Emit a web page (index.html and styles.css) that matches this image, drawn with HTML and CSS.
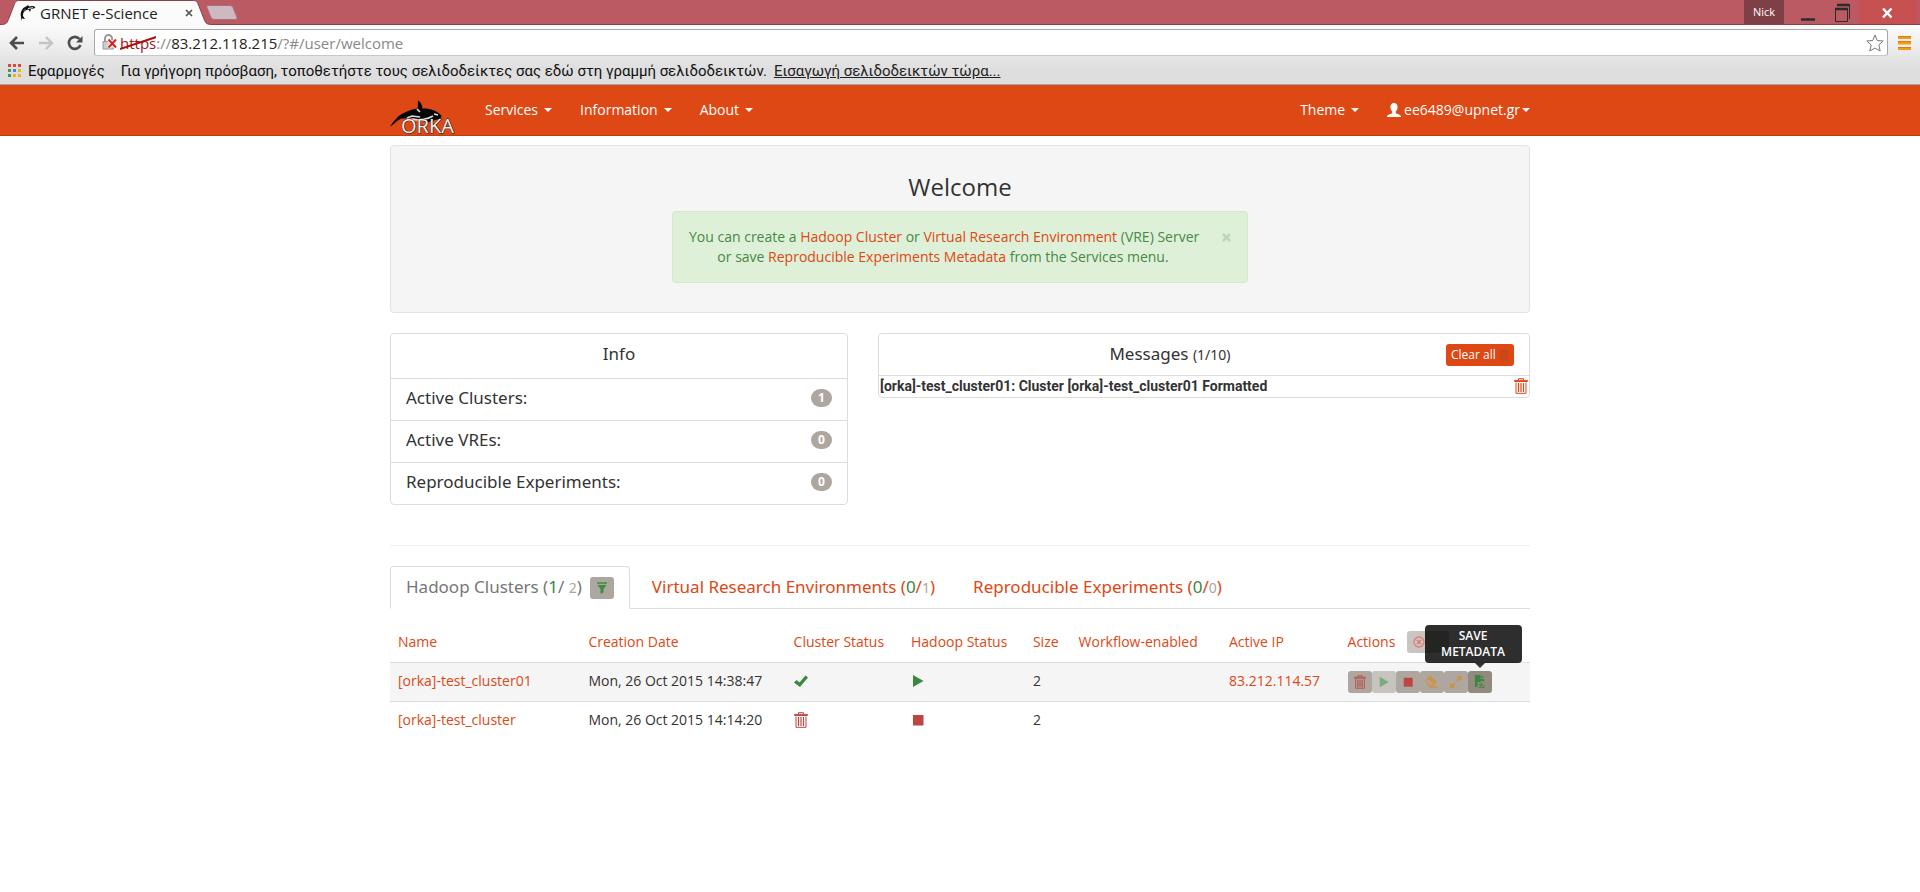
FILE: index.html
```html
<!DOCTYPE html>
<html lang="en">
<head>
<meta charset="utf-8">
<title>GRNET e-Science</title>
<link rel="stylesheet" href="styles.css">
</head>
<body>
<svg class="defs" aria-hidden="true">
  <symbol id="trash" viewBox="0 0 14 16"><path d="M4.500 2V.700h5V2M.500 3.500V2.400h13v1.100zM2 4.500v10.800h10V4.500" fill="none" stroke="currentColor"/><path d="M4.500 5v9M7 5v9M9.500 5v9" stroke="currentColor" stroke-width="1.200"/></symbol>
  <symbol id="play" viewBox="0 0 14 14"><path d="M2 1l10.500 6L2 13z" fill="currentColor"/></symbol>
  <symbol id="stop" viewBox="0 0 14 14"><path d="M2 2h10.500v10.500H2z" fill="currentColor"/></symbol>
</svg>
<header class="browser">
  <div class="tabstrip">
    <div class="tab-shape">
      <svg class="tab-bg" viewBox="0 0 213 25" preserveAspectRatio="none" aria-hidden="true"><path d="M0 24.500C7 24.500 7 23 9 18L14 5C15.500 1.500 16 .500 20 .500H192C196 .500 197 1 198.500 5L204 19C206 24 207 24.500 213 24.500V25H0z" fill="#fbfbfb"/><path d="M0 24.500C7 24.500 7 23 9 18L14 5C15.500 1.500 16 .500 20 .500H192C196 .500 197 1 198.500 5L204 19C206 24 207 24.500 213 24.500" fill="none" stroke="#8b3f47"/></svg>
      <svg class="favicon" viewBox="0 0 16 16" aria-hidden="true"><path d="M1 12C0 7 2 3 6 1.500L8 0l1 1.500C12 .500 14 1 15.500 2L14 3.500 11 4l-1 3-1.500-2.500C5 5 3 7 3 11l2 3-3-.500L1.500 16z" fill="#111"/><path d="M8 3.500l5-.800M4 5.500l1-1" stroke="#eee"/></svg>
      <span class="tab-title">GRNET e-Science</span>
      <button class="tab-close" aria-label="Close tab"><svg width="8" height="8" viewBox="0 0 8 8"><path d="M1 1l6 6M7 1L1 7" stroke="#555" stroke-width="1.700"/></svg></button>
    </div>
    <button class="new-tab" aria-label="New tab"><svg width="32" height="15" viewBox="0 0 32 15"><path d="M2 .500h22q2 0 3 2l4 10q.500 2-2 2H9q-3 0-4-2L1 2.500Q0 .500 2 .500z" fill="#ccb9c1" stroke="#a9707b"/></svg></button>
    <div class="window-controls">
      <button class="profile">Nick</button>
      <button class="win" aria-label="Minimize"><svg width="48" height="24"><path d="M17 20.500h14" stroke="#2b2b2b" stroke-width="2.500"/></svg></button>
      <button class="win" aria-label="Restore"><svg width="27" height="24"><path d="M3.500 10.500h12v12h-12z" fill="none" stroke="#2b2b2b"/><path d="M3 10h13M5 6h12" stroke="#2b2b2b" stroke-width="2.500"/><path d="M17.500 5v15" stroke="#2b2b2b"/></svg></button>
      <button class="win close" aria-label="Close"><svg width="58" height="24"><path d="M24 9.500l8.500 9M32.500 9.500l-8.500 9" stroke="#fff" stroke-width="2.500"/></svg></button>
    </div>
  </div>
  <div class="toolbar">
    <button class="tool" aria-label="Back"><svg width="16" height="14" viewBox="0 0 16 14"><path d="M15 7H2M8 1L2 7l6 6" fill="none" stroke="#4d4d4d" stroke-width="2.600"/></svg></button>
    <button class="tool" aria-label="Forward"><svg width="16" height="14" viewBox="0 0 16 14"><path d="M1 7h13M8 1l6 6-6 6" fill="none" stroke="#c4c4c4" stroke-width="2.400"/></svg></button>
    <button class="tool" aria-label="Reload"><svg width="16" height="16" viewBox="0 0 16 16"><path d="M12.500 4A6 6 0 1 0 13.500 10" fill="none" stroke="#4d4d4d" stroke-width="2.600"/><path d="M15.500 1v6.500H9z" fill="#4d4d4d"/></svg></button>
    <div class="address">
      <svg width="16" height="17" viewBox="0 0 16 17" aria-hidden="true"><path d="M3 8V4.500a3.500 3.500 0 0 1 7 0V8" fill="none" stroke="#999" stroke-width="2"/><path d="M1 7.500h10.500v7.500H1z" fill="#ccc" stroke="#999"/><path d="M6.500 5.500l7.500 8M14 5.500L6.500 13.500" stroke="#fff" stroke-width="4"/><path d="M6.500 5.500l7.500 8M14 5.500L6.500 13.500" stroke="#dc1c1c" stroke-width="2"/></svg>
      <div class="url" role="textbox" aria-label="Address"><span class="scheme">https<svg viewBox="0 0 36 14" preserveAspectRatio="none" aria-hidden="true"><path d="M0 13L36 1" stroke="#a31515" stroke-width="2"/></svg></span><span class="dim">://</span>83.212.118.215<span class="dim">/?#/user/welcome</span></div>
      <button class="star" aria-label="Bookmark"><svg width="18" height="18" viewBox="0 0 18 18"><path d="M9 1l2.200 5.500 6 .500-4.400 4 1.400 6L9 14l-5.200 3 1.400-6L.800 7l6-.500z" fill="#fff" stroke="#777" stroke-linejoin="round"/></svg></button>
    </div>
    <button class="menu" aria-label="Menu"><svg width="13" height="14" viewBox="0 0 13 14"><path d="M0 1.500h13M0 7h13M0 12.500h13" stroke="#f39c12" stroke-width="3"/><path d="M0 .500h13M0 5.500h13M0 11.500h13" stroke="#dd7a10"/></svg></button>
  </div>
  <div class="bookmarks">
    <svg width="14" height="14" viewBox="0 0 14 14" aria-hidden="true"><path d="M0 0h3v3H0zM5 0h3v3H5zM10 0h3v3h-3z" fill="#ea4335"/><path d="M0 5h3v3H0z" fill="#34a050"/><path d="M5 5h3v3H5z" fill="#3b83f0"/><path d="M10 5h3v3h-3zM5 10h3v3H5zM10 10h3v3h-3z" fill="#f6b010"/><path d="M0 10h3v3H0z" fill="#34a050"/></svg>
    <span class="apps">Εφαρμογές</span>
    <span class="hint">Για γρήγορη πρόσβαση, τοποθετήστε τους σελιδοδείκτες σας εδώ στη γραμμή σελιδοδεικτών.</span>
    <a href="#import">Εισαγωγή σελιδοδεικτών τώρα...</a>
  </div>
</header>

<nav class="navbar">
  <div class="container nav-inner">
    <a class="brand" href="#home" aria-label="ORKA"><svg width="68" height="35" viewBox="0 0 68 35"><path d="M0 26.500C4 21 8 15 15 12.500 19 10.500 23 9 27.500 8.500 28.500 5 27.500 3 28 .500 31 2 32 5 32.500 8.500 39 8 47 10.500 51.500 15.500 51.500 18 49 19.500 45 20L36 23 33 20 22 18 12 18.500C7 19.500 4 25 0 26.500z" fill="#050505"/><path d="M22 19c7 2 16 0 21-3M44 14l4 1M17 18l5-2 8 1M27 9l3 3" fill="none" stroke="#ddd" stroke-width="1.700"/><text x="11" y="33" class="brand-text">ORKA</text></svg></a>
    <div class="nav-left">
      <a href="#services">Services <i class="caret"></i></a>
      <a href="#information">Information <i class="caret"></i></a>
      <a href="#about">About <i class="caret"></i></a>
    </div>
    <div class="nav-right">
      <a href="#theme">Theme <i class="caret"></i></a>
      <a href="#user" class="user"><svg width="14" height="15" viewBox="0 0 14 15" aria-hidden="true"><path d="M7 0c2.600 0 3.600 1.800 3.600 4S9.700 7.700 8.800 8.600v1.700c2.700 1 4.400 1.700 5.200 2.700V14H0v-1c.8-1 2.500-1.700 5.200-2.700V8.600C4.300 7.700 3.400 6.200 3.400 4S4.400 0 7 0z" fill="#fff"/></svg>ee6489@upnet.gr<i class="caret"></i></a>
    </div>
  </div>
</nav>

<main class="container">
  <section class="well">
    <h1>Welcome</h1>
    <div class="alert">
      <button class="dismiss" aria-label="Dismiss"><svg width="9" height="9" viewBox="0 0 9 9"><path d="M1 1l7 7M8 1L1 8" stroke="#bdd5b8" stroke-width="2.600"/></svg></button>
      <p>You can create a <a href="#hadoop">Hadoop Cluster</a> or <a href="#vre">Virtual Research Environment</a> (VRE) Server<br>or save <a href="#metadata">Reproducible Experiments Metadata</a> from the Services menu.</p>
    </div>
  </section>

  <div class="panels">
    <section class="card info">
      <h2>Info</h2>
      <ul>
        <li>Active Clusters:<span class="badge">1</span></li>
        <li>Active VREs:<span class="badge">0</span></li>
        <li>Reproducible Experiments:<span class="badge">0</span></li>
      </ul>
    </section>
    <section class="card messages">
      <div class="msg-head">
        <h2>Messages <small>(1/10)</small></h2>
        <button class="clear">Clear all<svg width="10" height="12"><use href="#trash"/></svg></button>
      </div>
      <div class="msg"><strong>[orka]-test_cluster01: Cluster [orka]-test_cluster01 Formatted</strong><button class="msg-del" aria-label="Delete message"><svg width="14" height="16"><use href="#trash"/></svg></button></div>
    </section>
  </div>

  <hr>

  <div class="tabs">
    <div class="tab active"><a href="#clusters">Hadoop Clusters (<b>1</b>/ <small>2</small>)</a><button class="filter" aria-label="Filter"><svg width="10" height="12" viewBox="0 0 10 12"><path d="M0 1h10" stroke="#3a8f43" stroke-width="1.500"/><path d="M.500 3h9L6.500 7v3.500L3.500 12V7z" fill="#3a8f43"/></svg></button></div>
    <div class="tab"><a href="#vres">Virtual Research Environments (<b>0</b>/<small>1</small>)</a></div>
    <div class="tab"><a href="#experiments">Reproducible Experiments (<b>0</b>/<small>0</small>)</a></div>
  </div>

  <table class="clusters">
    <colgroup><col class="c-name"><col class="c-date"><col class="c-status"><col class="c-hadoop"><col class="c-size"><col class="c-flow"><col class="c-ip"><col class="c-actions"></colgroup>
    <thead>
      <tr>
        <th><a href="#s1">Name</a></th><th><a href="#s2">Creation Date</a></th><th><a href="#s3">Cluster Status</a></th><th><a href="#s4">Hadoop Status</a></th><th><a href="#s5">Size</a></th><th><a href="#s6">Workflow-enabled</a></th><th><a href="#s7">Active IP</a></th>
        <th class="actions-head"><div class="head-row"><a href="#s8">Actions</a><button class="reset" aria-label="Reset"><svg width="12" height="12" viewBox="0 0 12 12"><circle cx="6" cy="6" r="5" fill="none" stroke="#df7d78" stroke-width="1.300"/><path d="M4 4l4 4M8 4L4 8" stroke="#df7d78" stroke-width="1.600"/></svg></button></div></th>
      </tr>
    </thead>
    <tbody>
      <tr class="odd">
        <td><a href="#c1">[orka]-test_cluster01</a></td><td>Mon, 26 Oct 2015 14:38:47</td>
        <td><svg class="green" width="14" height="14" viewBox="0 0 14 14" role="img" aria-label="Active"><path d="M0 8.500L2.500 6l3 2.500L11.500 1.500 14 3.500 6 13z" fill="currentColor"/></svg></td>
        <td><svg class="green" width="14" height="14" role="img" aria-label="Started"><use href="#play"/></svg></td>
        <td>2</td><td></td><td><a href="#ip">83.212.114.57</a></td>
        <td class="actions"><div class="btns">
          <button class="act red" aria-label="Destroy"><svg width="12" height="14"><use href="#trash"/></svg></button><button class="act green faded" aria-label="Start"><svg width="12" height="12"><use href="#play"/></svg></button><button class="act red" aria-label="Stop"><svg width="12" height="12"><use href="#stop"/></svg></button><button class="act amber" aria-label="Format"><svg width="14" height="12" viewBox="0 0 14 12"><path d="M1.500 4L5 .800l6 5L8 9.500H4.500L1.500 6.500z" fill="none" stroke="currentColor" stroke-width="1.300"/><path d="M5 .800l6.300 5-2.300 2.700L3 3z" fill="currentColor"/><path d="M4 11.200h9" stroke="currentColor" stroke-width="1.500"/></svg></button><button class="act amber" aria-label="Scale"><svg width="12" height="12" viewBox="0 0 12 12"><path d="M7 0h5v5l-1.700-1.700L8 5.500 6.500 4l2.200-2.300zM5 12H0V7l1.700 1.700L4 6.500 5.500 8 3.300 10.300z" fill="currentColor"/></svg></button><span class="tip-anchor"><button class="act save green" aria-label="Save metadata" aria-describedby="tip"><svg width="11" height="13" viewBox="0 0 11 13"><path d="M1 0h5.500v4H10v3L8 5.500 5.500 7 3 7.500 4 9 3 12H1z" fill="currentColor"/><path d="M7.300 0L10 3H7.300z" fill="currentColor"/><path d="M7 7.500v3M5 9l2 2 2-2M4.500 12.300h5.500V10" fill="none" stroke="currentColor"/></svg></button><span class="tooltip" id="tip" role="tooltip">SAVE METADATA</span></span>
        </div></td>
      </tr>
      <tr>
        <td><a href="#c2">[orka]-test_cluster</a></td><td>Mon, 26 Oct 2015 14:14:20</td>
        <td><svg class="red" width="14" height="16" role="img" aria-label="Destroyed"><use href="#trash"/></svg></td>
        <td><svg class="red" width="14" height="14" role="img" aria-label="Stopped"><use href="#stop"/></svg></td>
        <td>2</td><td></td><td></td><td></td>
      </tr>
    </tbody>
  </table>
</main>
</body>
</html>
```
FILE: styles.css
```css
* { box-sizing: border-box; }
body { margin: 0; background: #fff; color: #333; font: 14px/20px "Open Sans", "Noto Sans", sans-serif; }
button { padding: 0; border: 0; background: none; color: inherit; font: inherit; cursor: pointer; }
a { color: #dd4814; text-decoration: none; }
h1, h2, p, ul { margin: 0; padding: 0; font-weight: 400; }
svg { display: block; flex: none; }
.defs { position: absolute; width: 0; height: 0; }
.container { width: 100%; max-width: 1140px; margin: 0 auto; }
.green { color: #38883f; }
.red { color: #bb4642; }
.amber { color: #cc9444; }

/* Browser frame */
.browser { color: #111; font: 15px/20px "Open Sans", "Noto Sans", sans-serif; background: linear-gradient(#fbfbfb 25px, #dedede 70px); border-bottom: 1px solid #a5a5a5; }
.tabstrip { display: flex; align-items: flex-start; height: 25px; background: #bb5a63; border-bottom: 1px solid #8b3f47; }
.tab-shape { position: relative; display: flex; align-items: center; width: 213px; height: 25px; padding: 0 20px; }
.tab-bg { position: absolute; left: 0; top: 0; width: 100%; height: 25px; }
.favicon, .tab-title, .tab-close { position: relative; }
.favicon { width: 16px; height: 16px; }
.tab-title { flex: 1; padding-left: 4px; color: #222; white-space: nowrap; }
.tab-close { width: 8px; height: 8px; }
.new-tab { margin: 5px 0 0 -7px; }
.window-controls { display: flex; margin-left: auto; padding-right: 3px; }
.profile { width: 40px; height: 24px; background: #7f3f46; color: #fff; font-size: 11px; line-height: 22px; }
.win { height: 24px; }
.win svg { margin-top: -3px; }
.close { background: #c75050; }
.toolbar { display: flex; align-items: center; gap: 13px; height: 32px; padding: 3px 9px 0 9px; }
.tool { width: 16px; }
.address { flex: 1; display: flex; align-items: center; height: 27px; margin-left: -2px; padding: 0 3px 0 7px; background: #fff; border: 1px solid #a8a8a8; border-bottom-color: #c8c8c8; border-radius: 3px; }
.url { flex: 1; padding-left: 2px; color: #222; white-space: nowrap; }
.scheme { position: relative; color: #a31515; }
.scheme svg { position: absolute; left: 0; top: 3px; width: 100%; height: 14px; }
.dim { color: #888; }
.toolbar .menu { margin-left: -3px; }
.bookmarks { display: flex; align-items: center; height: 27px; padding: 0 8px; font-family: Roboto, "Noto Sans", sans-serif; white-space: nowrap; }
.apps { margin: 0 16px 0 6px; }
.bookmarks a { margin-left: 7px; color: #222; text-decoration: underline; }

/* Navigation */
.navbar { background: #dd4814; border-bottom: 1px solid #bf3e11; }
.nav-inner { display: flex; height: 50px; }
.brand { margin-top: 15px; height: 35px; }
.brand svg { overflow: visible; }
.brand-text { font: 20px "Open Sans", sans-serif; fill: #eee; stroke: #222; stroke-width: 1px; paint-order: stroke; }
.nav-left, .nav-right { display: flex; align-items: center; gap: 28px; }
.nav-left { margin-left: 27px; }
.nav-right { margin-left: auto; }
.navbar a { display: flex; align-items: center; color: #fff; font-weight: 500; }
.caret { margin-left: 6px; border: 4px solid transparent; border-top-color: #fff; border-bottom: 0; }
.user svg { margin-right: 3px; }
.user .caret { margin-left: 2px; }

/* Welcome */
.well { margin-top: 9px; padding: 28px 20px 29px; background: #f5f5f5; border: 1px solid #e3e3e3; border-radius: 4px; text-align: center; }
h1 { font-size: 24px; line-height: 26px; margin-bottom: 11px; }
.alert { position: relative; width: 576px; max-width: 100%; margin: 0 auto; padding: 15px 50px 15px 16px; background: #dff0d8; border: 1px solid #d6e9c6; border-radius: 4px; color: #468847; white-space: nowrap; }
.dismiss { position: absolute; top: 21px; right: 16px; }

/* Panels */
.panels { display: grid; grid-template-columns: 458px 1fr; align-items: start; gap: 30px; margin-top: 20px; }
.card { border: 1px solid #ddd; border-radius: 4px; background: #fff; }
h2, .info li, .tab { font-family: "Noto Sans", sans-serif; font-size: 17px; }
h2 { line-height: 20px; text-align: center; }
.info h2 { padding: 10px 0 14px; }
.info li { display: flex; align-items: center; justify-content: space-between; height: 42px; padding: 0 15px 3px; border-top: 1px solid #ddd; }
.badge { width: 21px; height: 18px; border-radius: 9px; background: #aea79f; color: #fff; font-size: 12px; line-height: 18px; font-weight: 700; text-align: center; }
.msg-head { display: grid; grid-template-columns: 1fr 68px; align-items: center; height: 41px; padding: 0 15px; }
small { font-size: 14px; }
.clear { display: flex; align-items: center; justify-content: space-between; height: 22px; padding: 0 5px; border-radius: 3px; background: #dd4814; color: #fff; font-size: 12px; font-weight: 500; white-space: nowrap; }
.clear svg { color: #b84626; }
.msg { display: flex; justify-content: space-between; align-items: center; height: 22px; padding: 0 1px 2px; border-top: 1px solid #ddd; font-family: Roboto, sans-serif; }
.msg strong { font-weight: 700; }
.msg-del { color: #dd4814; }
hr { margin: 40px 0 20px; border: 0; border-top: 1px solid #eee; }

/* Tabs */
.tabs { display: flex; gap: 6px; border-bottom: 1px solid #ddd; }
.tab { display: flex; align-items: center; height: 42px; padding: 0 15px; margin-bottom: -1px; border: 1px solid transparent; white-space: nowrap; }
.tab.active { height: 43px; border-color: #ddd; border-bottom-color: #fff; border-radius: 4px 4px 0 0; background: #fff; }
.tab.active a { color: #777; }
.tab b { color: #38883f; font-weight: 400; }
.tab small { color: #aea79f; }
.filter { display: grid; place-items: center; width: 24px; height: 22px; margin-left: 8px; border-radius: 3px; background: #aea79f; }

/* Table */
.clusters { width: 100%; margin-top: 14px; border-collapse: collapse; table-layout: fixed; }
.c-name { width: 16.7%; }
.c-date { width: 18%; }
.c-status { width: 10.3%; }
.c-hadoop { width: 10.7%; }
.c-size { width: 4%; }
.c-flow { width: 13.2%; }
.c-ip { width: 10.4%; }
th, td { height: 39px; padding: 0 8px; text-align: left; font-weight: 400; white-space: nowrap; }
td { padding-bottom: 2px; border-top: 1px solid #ddd; }
td.actions { padding-bottom: 0; }
.odd td { background: #f5f5f5; }
.head-row { display: flex; align-items: center; gap: 12px; }
.reset { display: flex; align-items: center; width: 42px; height: 22px; padding-left: 6px; border-radius: 3px; background: #c9c5c0; }
.btns { display: flex; }
.act { display: grid; place-items: center; width: 24px; height: 22px; border-radius: 3px; background: #aea79f; }
.act.faded { background: #c7c3bf; color: #7bab7d; }
.act.save { background: #928a7e; }
.tip-anchor { position: relative; }
.tooltip { position: absolute; bottom: 30px; left: 50%; width: 97px; margin-left: -55px; padding: 3px 12px; border-radius: 4px; background: rgba(0, 0, 0, .82); color: #fff; font-size: 12px; line-height: 16px; font-weight: 600; text-align: center; white-space: normal; }
.tooltip::after { content: ""; position: absolute; top: 100%; left: 50px; border: 5px solid transparent; border-top-color: #333; border-bottom: 0; }
```
